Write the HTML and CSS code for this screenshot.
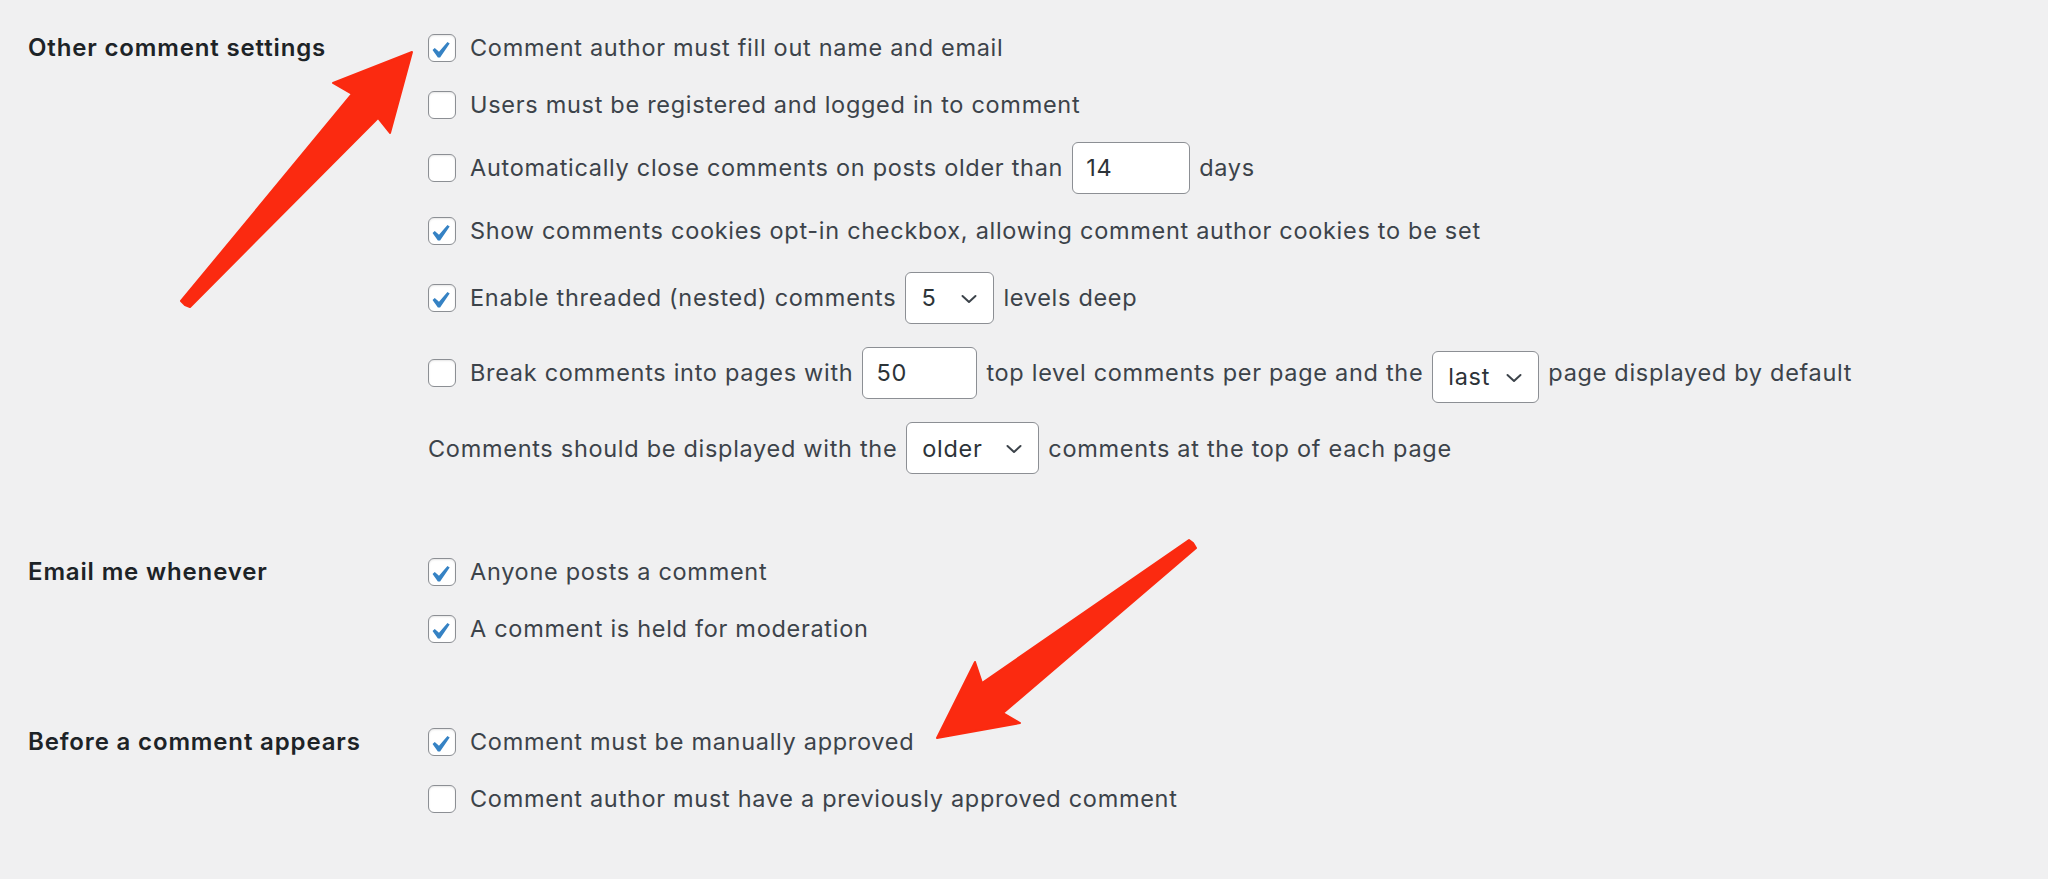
FILE: index.html
```html
<!DOCTYPE html>
<html lang="en">
<head>
<meta charset="utf-8">
<title>Discussion Settings</title>
<link rel="stylesheet" href="styles.css">
</head>
<body>
<main class="settings">
  <section class="setting">
    <h3 class="setting-label">Other comment settings</h3>
    <div class="setting-fields">
      <label class="row">
        <span class="cb is-checked"><svg viewBox="0 0 20 20"><path d="M14.83 4.89l1.34.94-5.81 8.38H9.02L5.78 9.67l1.34-1.25 2.57 2.4z"/></svg></span>
        <span>Comment author must fill out name and email</span>
      </label>
      <label class="row">
        <span class="cb"></span>
        <span>Users must be registered and logged in to comment</span>
      </label>
      <div class="row row-input">
        <span class="cb"></span>
        <span>Automatically close comments on posts older than</span>
        <input class="text-input w-14" type="text" value="14">
        <span>days</span>
      </div>
      <label class="row">
        <span class="cb is-checked"><svg viewBox="0 0 20 20"><path d="M14.83 4.89l1.34.94-5.81 8.38H9.02L5.78 9.67l1.34-1.25 2.57 2.4z"/></svg></span>
        <span>Show comments cookies opt-in checkbox, allowing comment author cookies to be set</span>
      </label>
      <div class="row row-select">
        <span class="cb is-checked"><svg viewBox="0 0 20 20"><path d="M14.83 4.89l1.34.94-5.81 8.38H9.02L5.78 9.67l1.34-1.25 2.57 2.4z"/></svg></span>
        <span>Enable threaded (nested) comments</span>
        <span class="select w-5"><select><option>5</option></select><svg class="chev" viewBox="0 0 16 10"><polyline points="1.5,2 8,8 14.5,2"/></svg></span>
        <span>levels deep</span>
      </div>
      <div class="row row-pages">
        <span class="cb"></span>
        <span>Break comments into pages with</span>
        <input class="text-input w-50" type="text" value="50">
        <span>top level comments per page and the</span>
        <span class="select w-last low"><select><option>last</option></select><svg class="chev" viewBox="0 0 16 10"><polyline points="1.5,2 8,8 14.5,2"/></svg></span>
        <span>page displayed by default</span>
      </div>
      <div class="row row-order">
        <span>Comments should be displayed with the</span>
        <span class="select w-older"><select><option>older</option></select><svg class="chev" viewBox="0 0 16 10"><polyline points="1.5,2 8,8 14.5,2"/></svg></span>
        <span>comments at the top of each page</span>
      </div>
    </div>
  </section>

  <section class="setting">
    <h3 class="setting-label">Email me whenever</h3>
    <div class="setting-fields">
      <label class="row">
        <span class="cb is-checked"><svg viewBox="0 0 20 20"><path d="M14.83 4.89l1.34.94-5.81 8.38H9.02L5.78 9.67l1.34-1.25 2.57 2.4z"/></svg></span>
        <span>Anyone posts a comment</span>
      </label>
      <label class="row">
        <span class="cb is-checked"><svg viewBox="0 0 20 20"><path d="M14.83 4.89l1.34.94-5.81 8.38H9.02L5.78 9.67l1.34-1.25 2.57 2.4z"/></svg></span>
        <span>A comment is held for moderation</span>
      </label>
    </div>
  </section>

  <section class="setting">
    <h3 class="setting-label">Before a comment appears</h3>
    <div class="setting-fields">
      <label class="row">
        <span class="cb is-checked"><svg viewBox="0 0 20 20"><path d="M14.83 4.89l1.34.94-5.81 8.38H9.02L5.78 9.67l1.34-1.25 2.57 2.4z"/></svg></span>
        <span>Comment must be manually approved</span>
      </label>
      <label class="row">
        <span class="cb"></span>
        <span>Comment author must have a previously approved comment</span>
      </label>
    </div>
  </section>
</main>

<svg class="annotations" viewBox="0 0 2048 879" aria-hidden="true">
  <polygon class="arrow" points="412,52 390,133 378,118 190,307 185,305 181,301 352,94 333,83"/>
  <polygon class="arrow" points="937,738 975,662 982,683 1189,540 1193,543 1196,548 1003,713 1020,723"/>
</svg>
</body>
</html>
```

FILE: styles.css
```css
* { box-sizing: border-box; }

html, body {
  margin: 0;
  padding: 0;
}

body {
  width: 2048px;
  height: 879px;
  overflow: hidden;
  position: relative;
  background: #f0f0f1;
  color: #3c434a;
  font-family: Inter, "Noto Sans", "Liberation Sans", sans-serif;
  font-size: 23.5px;
  letter-spacing: 0.7px;
}

.settings {
  display: flex;
  flex-direction: column;
  gap: 70px;
  padding: 26px 0 0 28px;
}

.setting {
  display: grid;
  grid-template-columns: 400px 1fr;
}

.setting-label {
  margin: 0;
  height: 43px;
  display: flex;
  align-items: center;
  font-size: 24px;
  font-weight: 600;
  letter-spacing: 0.85px;
  color: #1d2327;
}

.setting-fields {
  display: flex;
  flex-direction: column;
  gap: 14px;
}

.row {
  display: flex;
  align-items: center;
  gap: 9px;
  height: 43px;
  white-space: nowrap;
}

.row-input { height: 55px; }
.row-select { height: 63px; }
.row-pages { height: 59px; }
.row-order { height: 64px; }

.cb {
  position: relative;
  flex: none;
  width: 28px;
  height: 28px;
  margin-right: 5px;
  border: 1.5px solid #8c8f94;
  border-radius: 6px;
  background: #fff;
  box-shadow: inset 0 1px 2px rgba(0, 0, 0, 0.1);
}

.cb svg {
  position: absolute;
  left: -6px;
  top: -1px;
  width: 33px;
  height: 33px;
  fill: #3582c4;
}

.text-input,
.select select {
  font: inherit;
  letter-spacing: inherit;
  color: #2c3338;
  background: #fff;
  border: 1.5px solid #8c8f94;
  border-radius: 6px;
  height: 52px;
  padding: 0 13px;
  margin: 0;
  outline: none;
  box-shadow: none;
}

.w-14 { width: 118px; }
.w-50 { width: 115px; }

.select {
  position: relative;
  display: inline-flex;
}

.select select {
  appearance: none;
  -webkit-appearance: none;
  width: 100%;
  padding-left: 15px;
}

.select.low { margin-top: 8px; }

.w-5 { width: 89px; }
.w-last { width: 107px; }
.w-older { width: 133px; }

.chev {
  position: absolute;
  right: 17px;
  top: 50%;
  width: 16px;
  height: 10px;
  margin-top: -4px;
  fill: none;
  stroke: #3c434a;
  stroke-width: 2;
  stroke-linecap: round;
  stroke-linejoin: round;
  pointer-events: none;
}

.annotations {
  position: absolute;
  left: 0;
  top: 0;
  width: 2048px;
  height: 879px;
  pointer-events: none;
}

.arrow {
  fill: #fb2a10;
  stroke: #fb2a10;
  stroke-width: 2;
  stroke-linejoin: round;
}
```
